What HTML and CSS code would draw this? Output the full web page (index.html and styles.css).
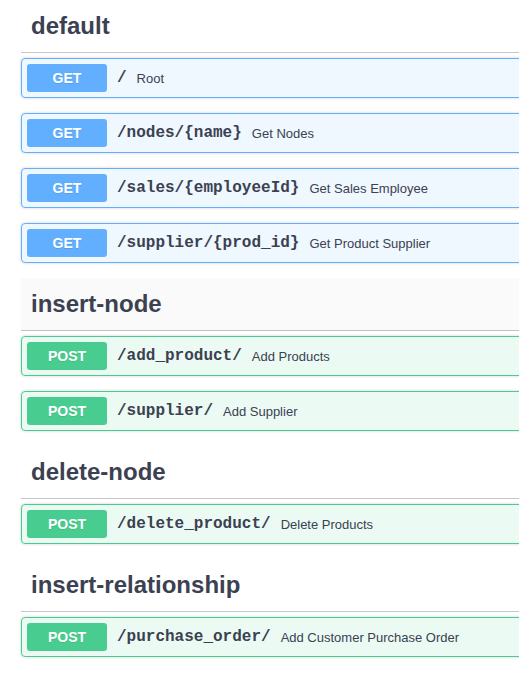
FILE: index.html
```html
<!DOCTYPE html>
<html lang="en">
<head>
<meta charset="utf-8">
<title>API</title>
<link rel="stylesheet" href="styles.css">
</head>
<body>
<div class="wrapper">
  <section class="tag-section">
    <h4 class="tag">default</h4>
    <div class="opblock get"><span class="method">GET</span><span class="path">/</span><span class="desc">Root</span></div>
    <div class="opblock get"><span class="method">GET</span><span class="path">/nodes/{name}</span><span class="desc">Get Nodes</span></div>
    <div class="opblock get"><span class="method">GET</span><span class="path">/sales/{employeeId}</span><span class="desc">Get Sales Employee</span></div>
    <div class="opblock get"><span class="method">GET</span><span class="path">/supplier/{prod_id}</span><span class="desc">Get Product Supplier</span></div>
  </section>
  <section class="tag-section">
    <h4 class="tag hover">insert-node</h4>
    <div class="opblock post"><span class="method">POST</span><span class="path">/add_product/</span><span class="desc">Add Products</span></div>
    <div class="opblock post"><span class="method">POST</span><span class="path">/supplier/</span><span class="desc">Add Supplier</span></div>
  </section>
  <section class="tag-section">
    <h4 class="tag">delete-node</h4>
    <div class="opblock post"><span class="method">POST</span><span class="path">/delete_product/</span><span class="desc">Delete Products</span></div>
  </section>
  <section class="tag-section">
    <h4 class="tag">insert-relationship</h4>
    <div class="opblock post"><span class="method">POST</span><span class="path">/purchase_order/</span><span class="desc">Add Customer Purchase Order</span></div>
  </section>
</div>
</body>
</html>
```

FILE: styles.css
```css
html, body {
  margin: 0;
  padding: 0;
  background: #fff;
  overflow: hidden;
}

.wrapper {
  padding-left: 21px;
  width: 580px;
  font-family: "Liberation Sans", Arial, sans-serif;
  color: #3b4151;
}

.tag {
  margin: 0 0 5px;
  height: 52px;
  padding: 0 20px 0 10px;
  display: flex;
  align-items: center;
  font-size: 24px;
  font-weight: 700;
  color: #3b4151;
  border-bottom: 1px solid rgba(59, 65, 81, 0.3);
}

.tag.hover {
  background: #fafafa;
}

.opblock {
  display: flex;
  align-items: center;
  margin: 0 0 15px;
  padding: 5px;
  height: 28px;
  border: 1px solid;
  border-radius: 4px;
  box-shadow: 0 0 3px rgba(0, 0, 0, 0.19);
}

.opblock.get {
  background: rgba(97, 175, 254, 0.1);
  border-color: #61affe;
}

.opblock.post {
  background: rgba(73, 204, 144, 0.1);
  border-color: #49cc90;
}

.method {
  width: 80px;
  height: 28px;
  flex: none;
  display: flex;
  align-items: center;
  justify-content: center;
  border-radius: 3px;
  color: #fff;
  font-size: 14px;
  font-weight: 700;
  text-shadow: 0 1px 0 rgba(0, 0, 0, 0.1);
}

.get .method { background: #61affe; }
.post .method { background: #49cc90; }

.path {
  padding: 0 10px;
  font-family: "Liberation Mono", "Courier New", monospace;
  font-size: 16px;
  font-weight: 700;
  color: #3b4151;
}

.desc {
  font-size: 13px;
  color: #3b4151;
}
```
